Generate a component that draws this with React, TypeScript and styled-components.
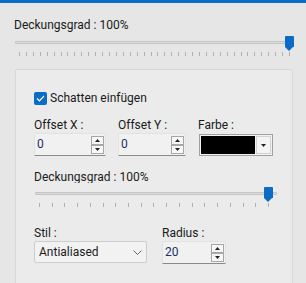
import React from 'react'
import styled, { createGlobalStyle } from 'styled-components'

const GlobalStyle = createGlobalStyle`
  html, body {
    margin: 0;
    padding: 0;
    background: #e6e6e6;
    font-family: Roboto, "Noto Sans", sans-serif;
    font-size: 12px;
    color: #1a1a1a;
    overflow: hidden;
  }
`

const Window = styled.div`
  width: 306px;
  height: 283px;
  overflow: hidden;
  display: flex;
  flex-direction: column;
`

const TopBar = styled.div`
  height: 3px;
  flex-shrink: 0;
  background: #0a6cc6;
`

const Content = styled.div`
  padding: 14px 14px 0 14px;
  display: flex;
  flex-direction: column;
`

const Label = styled.div<{ $height?: number }>`
  height: ${p => p.$height ?? 16}px;
  line-height: 16px;
  white-space: nowrap;
  overflow: hidden;
`

const SliderWrap = styled.div<{ $width: number; $top: number }>`
  position: relative;
  width: ${p => p.$width}px;
  height: 21px;
  margin-top: ${p => p.$top}px;
  margin-left: 1px;
  flex-shrink: 0;
`

const Track = styled.div`
  position: absolute;
  left: 0;
  right: 0;
  top: 5px;
  height: 1px;
  background: #dcdcdc;
  border: 1px solid #c4c4c4;
  border-radius: 1px;
`

const Thumb = styled.div<{ $left: number }>`
  position: absolute;
  top: 0;
  left: ${p => p.$left}px;
  width: 9px;
  height: 11px;
  background: #0a6cc6;
  border-radius: 1px 1px 0 0;

  &::after {
    content: '';
    position: absolute;
    left: 0;
    top: 11px;
    border-left: 4.5px solid transparent;
    border-right: 4.5px solid transparent;
    border-top: 4px solid #0a6cc6;
  }
`

const Ticks = styled.div<{ $left: number; $right: number }>`
  position: absolute;
  top: 16px;
  left: ${p => p.$left}px;
  right: ${p => p.$right}px;
  display: flex;
  justify-content: space-between;
`

const Tick = styled.span`
  width: 1px;
  height: 4px;
  background: #b0b0b0;
`

interface ISliderProps {
  width: number
  ticks: number
  left: number
  right: number
  top: number
}

const Slider = ({ width, ticks, left, right, top }: ISliderProps) => (
  <SliderWrap $width={width} $top={top}>
    <Track />
    <Ticks $left={left} $right={right}>
      {Array.from({ length: ticks }).map((_, i) => <Tick key={i} />)}
    </Ticks>
    <Thumb $left={width - right - 5} />
  </SliderWrap>
)

const Panel = styled.div`
  margin-top: 12px;
  margin-left: 1px;
  width: 278px;
  height: 240px;
  flex-shrink: 0;
  background: #ebebeb;
  border: 1px solid #d8d8d8;
  border-radius: 2px;
  padding: 20px 0 0 18px;
  box-sizing: border-box;
  display: flex;
  flex-direction: column;
`

const CheckRow = styled.label`
  display: flex;
  align-items: center;
  gap: 3px;
  height: 16px;
  line-height: 16px;
`

const CheckBox = styled.span`
  width: 13px;
  height: 13px;
  border-radius: 2px;
  background: #0a6cc6;
  display: flex;
  align-items: center;
  justify-content: center;
`

const FieldRow = styled.div<{ $top: number }>`
  display: flex;
  margin-top: ${p => p.$top}px;
`

const Field = styled.div<{ $width: number }>`
  width: ${p => p.$width}px;
  display: flex;
  flex-direction: column;
`

const SpinBox = styled.div<{ $width: number }>`
  width: ${p => p.$width}px;
  height: 23px;
  box-sizing: border-box;
  background: #f1f1f1;
  border: 1px solid #e2e2e2;
  border-bottom: 1px solid #8a8a8a;
  border-radius: 2px 2px 0 0;
  display: flex;
  align-items: center;
  justify-content: space-between;
  padding: 0 1px 0 2px;
`

const SpinValue = styled.span`
  color: #1c2f66;
  line-height: 21px;
`

const SpinButtons = styled.div`
  display: flex;
  flex-direction: column;
`

const SpinButton = styled.div`
  width: 11px;
  height: 7px;
  border: 1px solid #a8a8a8;
  background: #f8f8f8;
  display: flex;
  align-items: center;
  justify-content: center;
`

const ColorPicker = styled.div`
  width: 74px;
  height: 22px;
  margin: 1px 0 0 1px;
  box-sizing: border-box;
  border: 1px solid #a0a0a0;
  background: #f2f2f2;
  display: flex;
  align-items: stretch;
  padding: 1px;
  gap: 1px;
`

const Swatch = styled.div`
  flex: 1;
  background: #000;
`

const DropArrow = styled.div`
  width: 15px;
  border: 1px solid #d2d2d2;
  box-sizing: border-box;
  background: #f4f4f4;
  display: flex;
  align-items: center;
  justify-content: center;
`

const Combo = styled.div`
  width: 113px;
  height: 22px;
  box-sizing: border-box;
  background: #f2f2f2;
  border: 1px solid #cdcdcd;
  border-radius: 2px;
  display: flex;
  align-items: center;
  justify-content: space-between;
  padding: 0 4px 0 4px;
`

const Arrow = ({ up }: { up?: boolean }) => (
  <svg width="5" height="3" viewBox="0 0 5 3">
    <path d={up ? 'M0 3 L2.5 0 L5 3 Z' : 'M0 0 L2.5 3 L5 0 Z'} fill="#222" />
  </svg>
)

const Spin = ({ width, value }: { width: number; value: string }) => (
  <SpinBox $width={width}>
    <SpinValue>{value}</SpinValue>
    <SpinButtons>
      <SpinButton><Arrow up /></SpinButton>
      <SpinButton><Arrow /></SpinButton>
    </SpinButtons>
  </SpinBox>
)

const App = () => (
  <Window>
    <GlobalStyle />
    <TopBar />
    <Content>
      <Label>Deckungsgrad : 100%</Label>
      <Slider width={277} ticks={40} left={4} right={2} top={3} />
      <Panel>
        <CheckRow>
          <CheckBox>
            <svg width="9" height="7" viewBox="0 0 9 7">
              <path d="M1 3.5 L3.5 6 L8 1" stroke="#fff" strokeWidth="1.2" fill="none" />
            </svg>
          </CheckBox>
          Schatten einfügen
        </CheckRow>
        <FieldRow $top={11}>
          <Field $width={84}>
            <Label>Offset X :</Label>
            <Spin width={72} value="0" />
          </Field>
          <Field $width={80}>
            <Label>Offset Y :</Label>
            <Spin width={68} value="0" />
          </Field>
          <Field $width={80}>
            <Label>Farbe :</Label>
            <ColorPicker>
              <Swatch />
              <DropArrow><Arrow /></DropArrow>
            </ColorPicker>
          </Field>
        </FieldRow>
        <FieldRow $top={13}>
          <Label $height={14}>Deckungsgrad : 100%</Label>
        </FieldRow>
        <Slider width={242} ticks={19} left={4} right={8} top={4} />
        <FieldRow $top={17}>
          <Field $width={128}>
            <Label>Stil :</Label>
            <Combo>
              Antialiased
              <svg width="9" height="5" viewBox="0 0 9 5">
                <path d="M0.5 0.5 L4.5 4.5 L8.5 0.5" stroke="#666" strokeWidth="1" fill="none" />
              </svg>
            </Combo>
          </Field>
          <Field $width={80}>
            <Label>Radius :</Label>
            <Spin width={64} value="20" />
          </Field>
        </FieldRow>
      </Panel>
    </Content>
  </Window>
)

export default App
